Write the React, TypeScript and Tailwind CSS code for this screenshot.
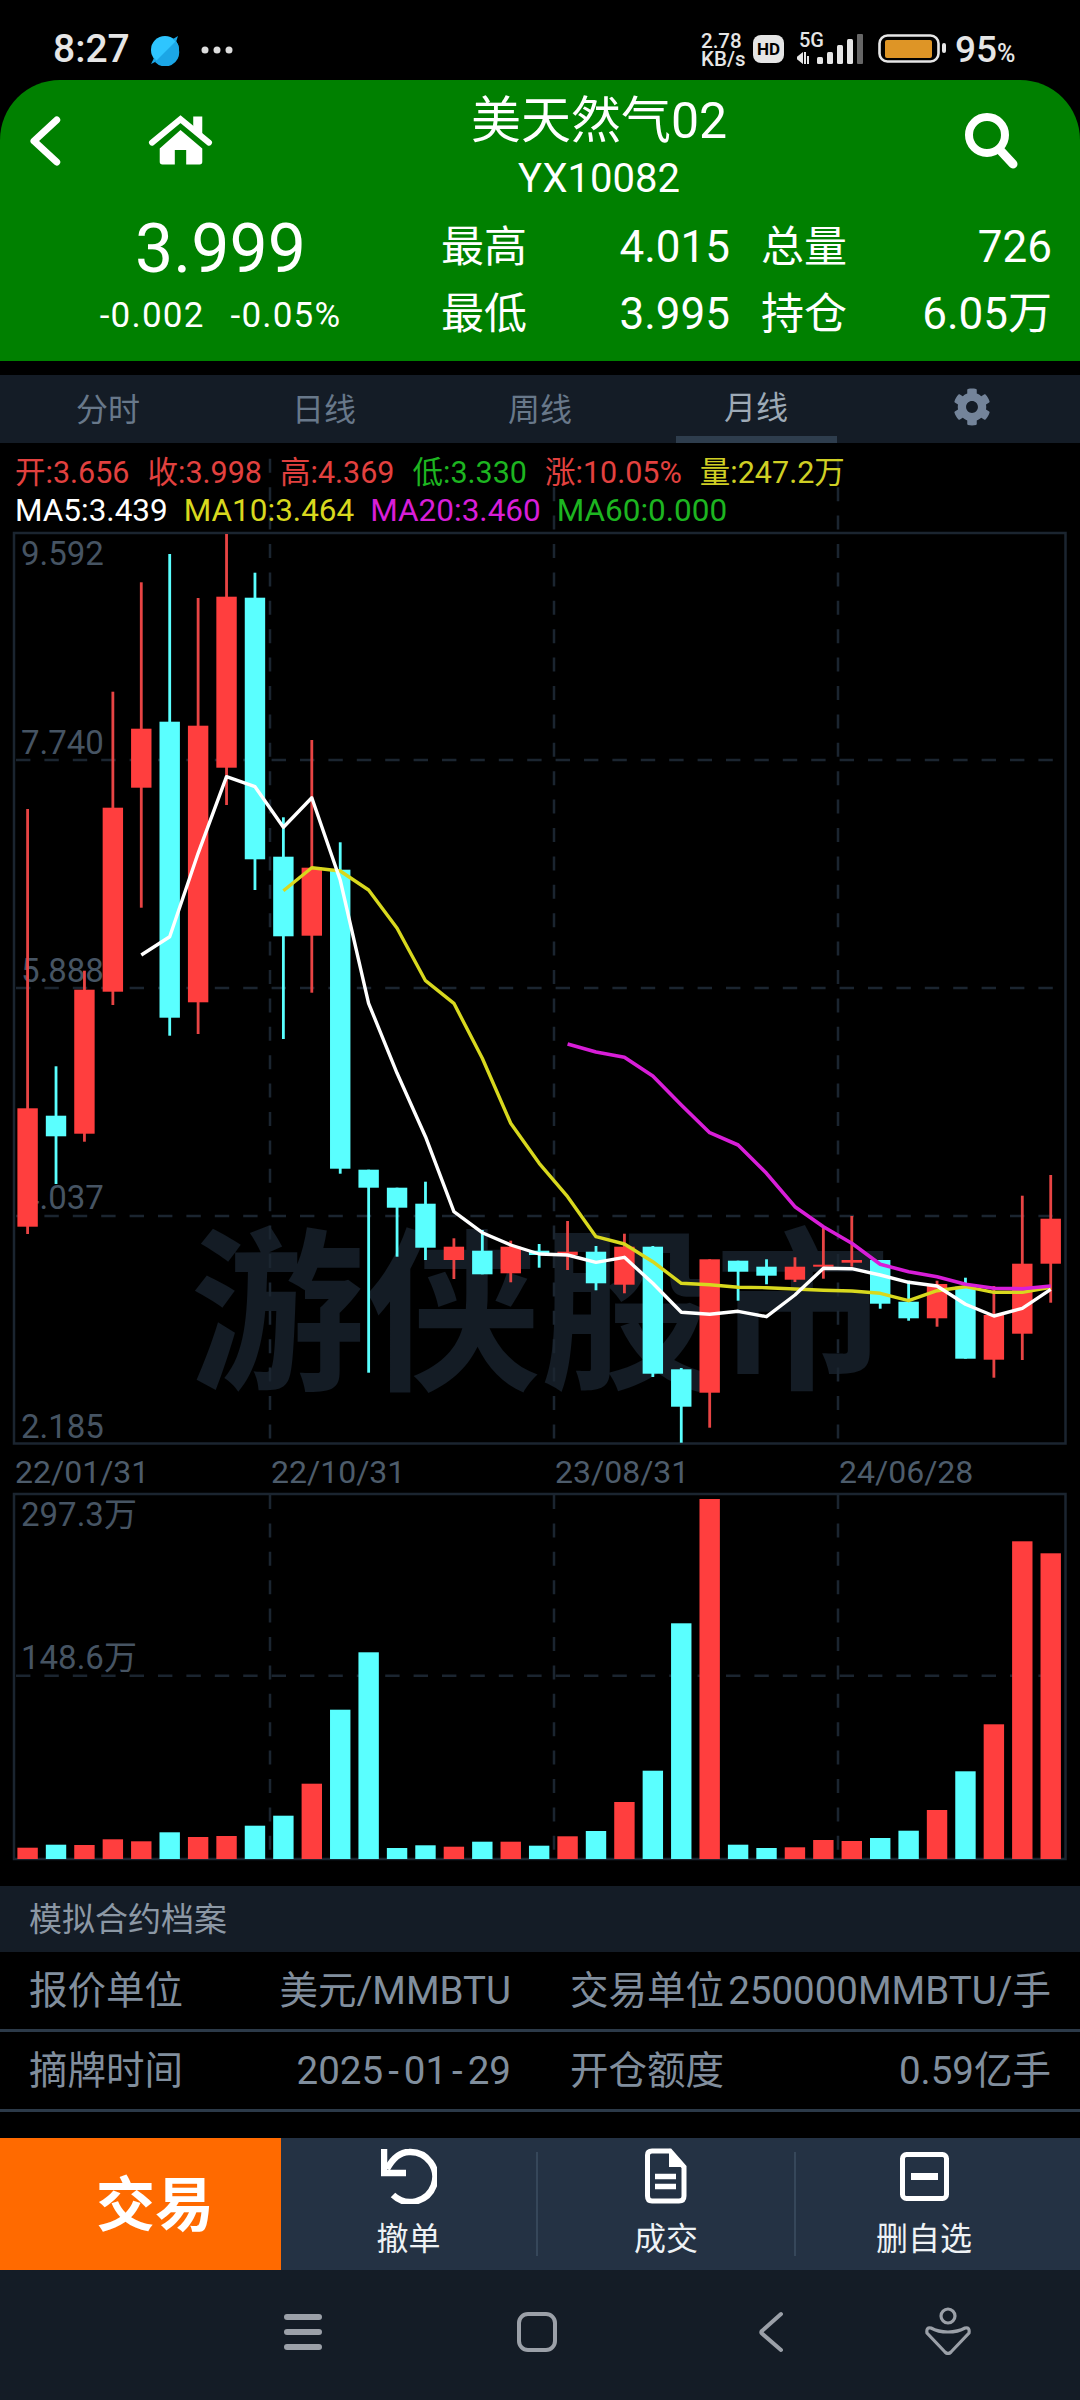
import { FaCog } from "react-icons/fa";

// Monthly candles: [rising, wick high, body top, body bottom, wick low], in page pixels.
const CANDLES: [boolean, number, number, number, number][] = [
  [true, 809, 1108.3, 1226.7, 1234],
  [false, 1066.3, 1115.7, 1136.3, 1184],
  [true, 970.7, 989.7, 1133.7, 1141.7],
  [true, 691.7, 807.7, 991.7, 1005],
  [true, 582.3, 728.7, 787.7, 907.7],
  [false, 554, 721.7, 1017.7, 1035.7],
  [true, 598, 725.7, 1002.3, 1034],
  [true, 534, 596.7, 767.7, 805],
  [false, 572.7, 597.7, 859.3, 890],
  [false, 817.3, 856.7, 936.3, 1039],
  [true, 740, 867.7, 935.7, 992.7],
  [false, 842.3, 869.7, 1168.7, 1173.7],
  [false, 1169.7, 1169.7, 1187.7, 1372.7],
  [false, 1187.7, 1187.7, 1207.7, 1256.7],
  [false, 1181.7, 1203.7, 1247.7, 1260],
  [true, 1238.3, 1246.7, 1260, 1279],
  [false, 1230, 1250.7, 1274.3, 1274.3],
  [true, 1240.7, 1246.7, 1273.3, 1282.3],
  [false, 1244, 1250.7, 1255, 1267.7],
  [true, 1221, 1251.7, 1255, 1270],
  [false, 1246, 1251.7, 1283.3, 1290.3],
  [true, 1233.7, 1246.7, 1284.7, 1293.3],
  [false, 1246, 1246.7, 1373.7, 1377],
  [false, 1368, 1369.3, 1406.7, 1442.7],
  [true, 1259.3, 1259.3, 1392.7, 1427.7],
  [false, 1260.7, 1260.7, 1271.7, 1300.7],
  [false, 1259.3, 1266.7, 1275.7, 1284.3],
  [true, 1257.3, 1266.7, 1279.7, 1282],
  [true, 1226.7, 1264.7, 1266.7, 1278.7],
  [true, 1216, 1260, 1262.7, 1266.7],
  [false, 1260, 1260, 1303.7, 1308.7],
  [false, 1280.7, 1301.7, 1318.3, 1320.7],
  [true, 1280.7, 1284, 1318.3, 1326.7],
  [false, 1277.7, 1286.7, 1358.7, 1358.7],
  [true, 1286, 1315, 1359.7, 1377.7],
  [true, 1195.7, 1263.7, 1333.7, 1360],
  [true, 1175, 1218.7, 1263.7, 1302.7],
];

const VOLUME_TOPS = [
  1847.7, 1844.7, 1845, 1839.3, 1841.3, 1832.3, 1837, 1836, 1825.7, 1815.7, 1783.7, 1709.7, 1652.3, 1848, 1845.3,
  1846.7, 1841.7, 1841.7, 1845.7, 1836.3, 1831, 1802, 1770.7, 1623.3, 1499, 1844.7, 1848, 1847.3, 1840, 1841, 1838,
  1830.7, 1810, 1771.3, 1724.3, 1541.3, 1553.3,
];

const MA5 = [
  955, 936.7, 853.3, 776.7, 786.7, 827.3, 797.7, 880, 1003.3, 1073.3, 1136.7, 1211.7, 1232.7, 1245, 1254, 1255,
  1262.3, 1257.3, 1283.3, 1312.3, 1314.3, 1311.3, 1316.7, 1295, 1268.3, 1268.7, 1275, 1282.3, 1286, 1304.3, 1316,
  1308.3, 1289.3,
];
const MA10 = [
  890.7, 867.7, 871, 890, 928.3, 980.7, 1003.3, 1058.3, 1123.3, 1163.3, 1196.7, 1236.7, 1244, 1261.7, 1283.3, 1284.7,
  1287.3, 1287.7, 1289, 1290.3, 1291, 1293.3, 1300.7, 1290.7, 1286.7, 1292.3, 1292.3, 1287.3,
];
const MA20 = [
  1044, 1052, 1057.3, 1076, 1105, 1132.7, 1145, 1173.3, 1206.7, 1226.7, 1243.3, 1264.3, 1271.7, 1276.7, 1284.3, 1288.3,
  1288.7, 1286,
];

const RED = "#ff3e3e";
const CYAN = "#5affff";
const GRID = "#1b2530";

const slotX = (i: number) => 27.6 + 28.42 * i;
const linePoints = (values: number[], start: number) =>
  values.map((y, i) => `${slotX(start + i).toFixed(1)},${y}`).join(" ");

function ChartCanvas() {
  return (
    <svg className="absolute inset-0 h-full w-full" viewBox="0 443 1080 1443">
      {/* frames */}
      <rect x="14" y="533" width="1051.5" height="910.5" fill="none" stroke={GRID} strokeWidth="2.5" />
      <rect x="14" y="1494" width="1051.5" height="365" fill="none" stroke={GRID} strokeWidth="2.5" />

      {/* dashed guides */}
      {[760, 988, 1216, 1675.7].map((y) => (
        <line key={y} x1="16" x2="1055" y1={y} y2={y} stroke={GRID} strokeWidth="2.5" strokeDasharray="14.4 14" />
      ))}
      {[270, 554, 838].map((x) => (
        <g key={x}>
          <line x1={x} x2={x} y1="458.8" y2="1443" stroke={GRID} strokeWidth="2.5" strokeDasharray="14 14.4" />
          <line x1={x} x2={x} y1="1495" y2="1859" stroke={GRID} strokeWidth="2.5" strokeDasharray="14 14.4" />
        </g>
      ))}

      {/* price candles */}
      {CANDLES.map(([up, high, top, bottom, low], i) => {
        const x = slotX(i);
        const fill = up ? RED : CYAN;
        return (
          <g key={i}>
            <rect x={x - 1.4} y={high} width="2.8" height={low - high} fill={up ? "#e84444" : CYAN} />
            <rect x={x - 10.2} y={top} width="20.4" height={Math.max(bottom - top, 2)} fill={fill} />
          </g>
        );
      })}

      {/* moving averages */}
      <polyline points={linePoints(MA10, 9)} fill="none" stroke="#d8d81e" strokeWidth="3.4" strokeLinejoin="round" />
      <polyline points={linePoints(MA20, 19)} fill="none" stroke="#d81ed8" strokeWidth="3.6" strokeLinejoin="round" />
      <polyline points={linePoints(MA5, 4)} fill="none" stroke="#ffffff" strokeWidth="3.4" strokeLinejoin="round" />

      {/* volume bars */}
      {VOLUME_TOPS.map((top, i) => (
        <rect
          key={i}
          x={slotX(i) - 10.2}
          y={top}
          width="20.4"
          height={1859 - top}
          fill={CANDLES[i][0] ? RED : CYAN}
        />
      ))}
    </svg>
  );
}

function ChartSection() {
  return (
    <section className="relative h-[1443px] overflow-hidden bg-black">
      <div className="absolute left-[190px] top-[786px] whitespace-nowrap text-[175px] font-semibold leading-[175px] text-[#141c25]">
        游侠股市
      </div>

      <span className="absolute left-[21px] top-[91px] text-[33px] leading-[40px] text-[#465463]">9.592</span>
      <span className="absolute left-[21px] top-[280px] text-[33px] leading-[40px] text-[#465463]">7.740</span>
      <span className="absolute left-[21px] top-[508px] text-[33px] leading-[40px] text-[#465463]">5.888</span>
      <span className="absolute left-[21px] top-[735px] text-[33px] leading-[40px] text-[#465463]">4.037</span>
      <span className="absolute left-[21px] top-[964px] text-[33px] leading-[40px] text-[#465463]">2.185</span>

      <span className="absolute left-[15px] top-[1009px] text-[32px] leading-[40px] text-[#4d5c6b]">22/01/31</span>
      <span className="absolute left-[271px] top-[1009px] text-[32px] leading-[40px] text-[#4d5c6b]">22/10/31</span>
      <span className="absolute left-[555px] top-[1009px] text-[32px] leading-[40px] text-[#4d5c6b]">23/08/31</span>
      <span className="absolute left-[839px] top-[1009px] text-[32px] leading-[40px] text-[#4d5c6b]">24/06/28</span>

      <span className="absolute left-[21px] top-[1052px] text-[33px] leading-[40px] text-[#465463]">297.3万</span>
      <span className="absolute left-[21px] top-[1195px] text-[33px] leading-[40px] text-[#465463]">148.6万</span>

      <ChartCanvas />

      <div className="relative pl-[15px] pt-[11px]">
        <div className="flex h-[38px] items-center gap-[18px] whitespace-nowrap text-[30.5px]">
          <span className="text-[#e2413f]">开:3.656</span>
          <span className="text-[#e2413f]">收:3.998</span>
          <span className="text-[#e2413f]">高:4.369</span>
          <span className="text-[#1db520]">低:3.330</span>
          <span className="text-[#e2413f]">涨:10.05%</span>
          <span className="text-[#cfcf24]">量:247.2万</span>
        </div>
        <div className="flex h-[38px] items-center gap-[16px] whitespace-nowrap text-[31.5px]">
          <span className="text-white">MA5:3.439</span>
          <span className="text-[#d8d81e]">MA10:3.464</span>
          <span className="text-[#d81ed8]">MA20:3.460</span>
          <span className="text-[#1db520]">MA60:0.000</span>
        </div>
      </div>
    </section>
  );
}

function StatusBar() {
  return (
    <div className="flex h-[80px] items-start bg-black pl-[53px] pt-[28px] text-[#e6e6e6]">
      <span className="w-[78px] text-[39px] font-medium leading-[42px]">8:27</span>
      <svg className="ml-[18px] mt-[6px] h-[32px] w-[32px]" viewBox="0 0 32 32">
        <circle cx="16" cy="16" r="14" fill="#2ec5ff" />
        <path d="M27 7 L6 28 A14 14 0 0 0 30 16 Q30 11 27 7Z" fill="#1ba6e6" />
        <path d="M24 5 L29 2 L27 8Z M8 27 L2 30 L5 24Z" fill="#1ba6e6" />
      </svg>
      <svg className="ml-[20px] mt-[14px] h-[16px] w-[34px]" viewBox="0 0 34 16" fill="#dddddd">
        <circle cx="4" cy="8" r="3.5" />
        <circle cx="16" cy="8" r="3.5" />
        <circle cx="28" cy="8" r="3.5" />
      </svg>

      <div className="ml-[466px] mt-[4px] flex w-[44px] flex-col text-[20.5px] font-medium leading-[18px]">
        <span>2.78</span>
        <span>KB/s</span>
      </div>
      <span className="ml-[8px] mt-[7px] flex h-[28px] w-[31px] items-center justify-center rounded-[8px] bg-[#e5e5e5] text-[17px] font-bold leading-none text-black">
        HD
      </span>
      <div className="relative ml-[13px] mt-[4px] h-[32px] w-[66px]">
        <span className="absolute left-[2px] -top-[1px] text-[20px] font-medium leading-[18px]">5G</span>
        <svg className="absolute inset-0 h-full w-full" viewBox="0 0 66 32">
          <path d="M0 26 L5 22 V30Z M8 20 V32 M11 24 V32" stroke="#e6e6e6" strokeWidth="2" fill="#e6e6e6" />
          <rect x="20" y="25" width="6" height="7" rx="1.5" fill="#e6e6e6" />
          <rect x="30" y="20" width="6" height="12" rx="1.5" fill="#e6e6e6" />
          <rect x="40" y="13" width="6" height="19" rx="1.5" fill="#e6e6e6" />
          <rect x="50" y="7" width="6" height="25" rx="1.5" fill="#e6e6e6" />
          <rect x="60" y="2" width="6" height="30" rx="1" fill="#666666" />
        </svg>
      </div>
      <svg className="ml-[15px] mt-[6px] h-[29px] w-[69px]" viewBox="0 0 69 29">
        <rect x="1.5" y="1.5" width="59" height="26" rx="8" fill="none" stroke="#e6e6e6" strokeWidth="2.6" />
        <rect x="7" y="6" width="47" height="18" rx="2" fill="#de9526" />
        <rect x="64" y="9" width="4" height="10" rx="2" fill="#e6e6e6" />
      </svg>
      <span className="ml-[8px] mt-[1px] whitespace-nowrap text-[37px] font-medium leading-[42px]">
        95<span className="text-[25px]">%</span>
      </span>
    </div>
  );
}

function Header() {
  return (
    <header className="h-[281px] rounded-t-[60px] bg-[#008000] text-white">
      <div className="flex h-[130px] items-start">
        <svg className="ml-[30px] mt-[36px] h-[50px] w-[32px]" viewBox="0 0 32 50" fill="none">
          <path d="M26.7 4 L4 25 L26.7 46" stroke="#fff" strokeWidth="7" strokeLinecap="round" strokeLinejoin="round" />
        </svg>
        <svg className="ml-[85px] mt-[33px] h-[54px] w-[67px]" viewBox="440 280 200 160" fill="#fff">
          <path d="M455 368 L540 298 L625 368" fill="none" stroke="#fff" strokeWidth="18" strokeLinecap="round" strokeLinejoin="miter" />
          <path d="M578 290 H605 V345 L578 320Z" />
          <path d="M540 330 L605 385 V425 Q605 433 597 433 H557 V390 H523 V433 H486 Q478 433 478 425 V385Z" />
        </svg>
        <div className="ml-[185px] flex w-[400px] flex-col items-center pt-[13px]">
          <span className="h-[56px] whitespace-nowrap text-[50px] leading-[56px]">美天然气02</span>
          <span className="mt-[2px] h-[56px] text-[40px] leading-[56px]">YX10082</span>
        </div>
        <svg className="ml-[165px] mt-[33px] h-[56px] w-[56px]" viewBox="0 0 56 56" fill="none">
          <circle cx="23" cy="22" r="18" stroke="#fff" strokeWidth="8" />
          <path d="M36 37 L49 51" stroke="#fff" strokeWidth="9" strokeLinecap="round" />
        </svg>
      </div>
      <div className="flex pt-[3px]">
        <div className="flex w-[441px] flex-col items-center">
          <span className="h-[72px] text-[68px] leading-[72px]">3.999</span>
          <span className="mt-[9px] flex h-[44px] gap-[26px] text-[35px] leading-[44px] tracking-[1.2px]">
            <span>-0.002</span>
            <span>-0.05%</span>
          </span>
        </div>
        <div className="grid grid-cols-[86px_203px_31px_85px_206px] pt-[1px] text-[43px] leading-[67px]">
          <span className="whitespace-nowrap">最高</span>
          <span className="text-right text-[44px]">4.015</span>
          <span />
          <span className="whitespace-nowrap">总量</span>
          <span className="text-right text-[44px]">726</span>
          <span className="whitespace-nowrap">最低</span>
          <span className="text-right text-[44px]">3.995</span>
          <span />
          <span className="whitespace-nowrap">持仓</span>
          <span className="whitespace-nowrap text-right text-[44px]">6.05万</span>
        </div>
      </div>
    </header>
  );
}

function Tabs() {
  return (
    <nav className="mt-[14px] grid h-[68px] grid-cols-5 bg-[#141c26] text-[32px] text-[#68788a]">
      <div className="flex items-center justify-center pt-[2px]">分时</div>
      <div className="flex items-center justify-center pt-[2px]">日线</div>
      <div className="flex items-center justify-center pt-[2px]">周线</div>
      <div className="flex flex-col items-center">
        <span className="flex flex-1 items-center pt-[4px] text-[#9eaab6]">月线</span>
        <span className="h-[7px] w-[161px] bg-[#2e3d4d]" />
      </div>
      <div className="flex items-center justify-center pb-[4px]">
        <FaCog className="h-[38px] w-[38px] text-[#74849a]" />
      </div>
    </nav>
  );
}

function Spec() {
  return (
    <section className="bg-black text-[38.5px] text-[#808e9d]">
      <div className="flex h-[66px] items-center bg-[#141c26] pl-[29px] pt-[2px] text-[33px] text-[#8c98a5]">模拟合约档案</div>
      <div className="flex h-[80px] items-center border-b-[3px] border-[#2c3a49] pl-[29px]">
        <div className="flex w-[482px] justify-between whitespace-nowrap">
          <span>报价单位</span>
          <span>美元/MMBTU</span>
        </div>
        <div className="ml-[59px] flex w-[481px] justify-between whitespace-nowrap">
          <span>交易单位</span>
          <span>250000MMBTU/手</span>
        </div>
      </div>
      <div className="flex h-[80px] items-center border-b-[3px] border-[#2c3a49] pl-[29px]">
        <div className="flex w-[482px] justify-between whitespace-nowrap">
          <span>摘牌时间</span>
          <span>
            2025<span className="mx-[5px]">-</span>01<span className="mx-[5px]">-</span>29
          </span>
        </div>
        <div className="ml-[59px] flex w-[481px] justify-between whitespace-nowrap">
          <span>开仓额度</span>
          <span>0.59亿手</span>
        </div>
      </div>
    </section>
  );
}

function Toolbar() {
  const cell = "flex flex-col items-center pt-[10px] text-[32px] leading-[40px] text-[#eef2f5]";
  return (
    <div className="mt-[26px] flex h-[132px] bg-[#243244]">
      <div className="flex w-[281px] items-center bg-[#ff6a00] pl-[96px] pt-[4px] text-[59px] font-bold text-white">
        交易
      </div>
      <div className={`${cell} w-[255px]`}>
        <svg className="h-[56px] w-[56px]" viewBox="0 0 56 56" fill="none" stroke="#fff">
          <path d="M3 1 V25 H25" strokeWidth="6.5" />
          <path d="M6 21 C12 10 19 4 28 4 A25 25 0 1 1 12 47" strokeWidth="6.5" />
        </svg>
        <span className="mt-[15px]">撤单</span>
      </div>
      <span className="h-[104px] w-[2px] self-center bg-[#36475a]" />
      <div className={`${cell} w-[256px]`}>
        <svg className="h-[56px] w-[42px]" viewBox="0 0 42 56" fill="none" stroke="#fff">
          <path d="M7 3 H25 L39 19 V48 Q39 53 34 53 H7 Q2.500 53 2.500 48 V7 Q2.500 3 7 3Z" strokeWidth="5" />
          <path d="M25 3 V18 H39 Z" fill="#fff" strokeWidth="2" />
          <path d="M10 28.500 H31 M10 38.500 H31" strokeWidth="5.500" />
        </svg>
        <span className="mt-[15px]">成交</span>
      </div>
      <span className="h-[104px] w-[2px] self-center bg-[#36475a]" />
      <div className={`${cell} w-[256px]`}>
        <svg className="mt-[4px] h-[49px] w-[49px]" viewBox="0 0 49 49" fill="none" stroke="#fff">
          <rect x="2.500" y="2.500" width="44" height="44" rx="4" strokeWidth="5" />
          <path d="M11 24.500 H38" strokeWidth="7" />
        </svg>
        <span className="mt-[18px]">删自选</span>
      </div>
    </div>
  );
}

function SystemNav() {
  return (
    <div className="flex h-[130px] items-center bg-[#141c26] pb-[6px] pl-[284px]">
      <svg className="h-[38px] w-[38px]" viewBox="0 0 38 38" fill="#9ba0a8">
        <rect x="0" y="1" width="38" height="6" rx="3" />
        <rect x="0" y="16" width="38" height="6" rx="3" />
        <rect x="0" y="31" width="38" height="6" rx="3" />
      </svg>
      <svg className="ml-[194px] h-[42px] w-[42px]" viewBox="0 0 42 42" fill="none">
        <rect x="3" y="3" width="36" height="36" rx="9" stroke="#9ba0a8" strokeWidth="4" />
      </svg>
      <svg className="ml-[199px] h-[42px] w-[28px]" viewBox="0 0 28 42" fill="none">
        <path d="M24 3 L5 20 Q3.500 21 5 22.500 L24 39" stroke="#9ba0a8" strokeWidth="4" strokeLinecap="round" />
      </svg>
      <svg className="ml-[140px] -mt-[2px] h-[48px] w-[46px]" viewBox="0 0 46 48" fill="none" stroke="#9ba0a8" strokeWidth="3.200">
        <circle cx="23" cy="9" r="7" />
        <path d="M6 21 Q13 25 23 25 Q33 25 40 21 Q45 20 44 26 L26 45 Q23 48 20 45 L2 26 Q1 20 6 21Z" />
      </svg>
    </div>
  );
}

export default function App() {
  return (
    <div className="h-[2400px] w-[1080px] overflow-hidden bg-black font-['Roboto','Noto_Sans_CJK_SC',sans-serif]">
      <StatusBar />
      <Header />
      <Tabs />
      <ChartSection />
      <Spec />
      <Toolbar />
      <SystemNav />
    </div>
  );
}
